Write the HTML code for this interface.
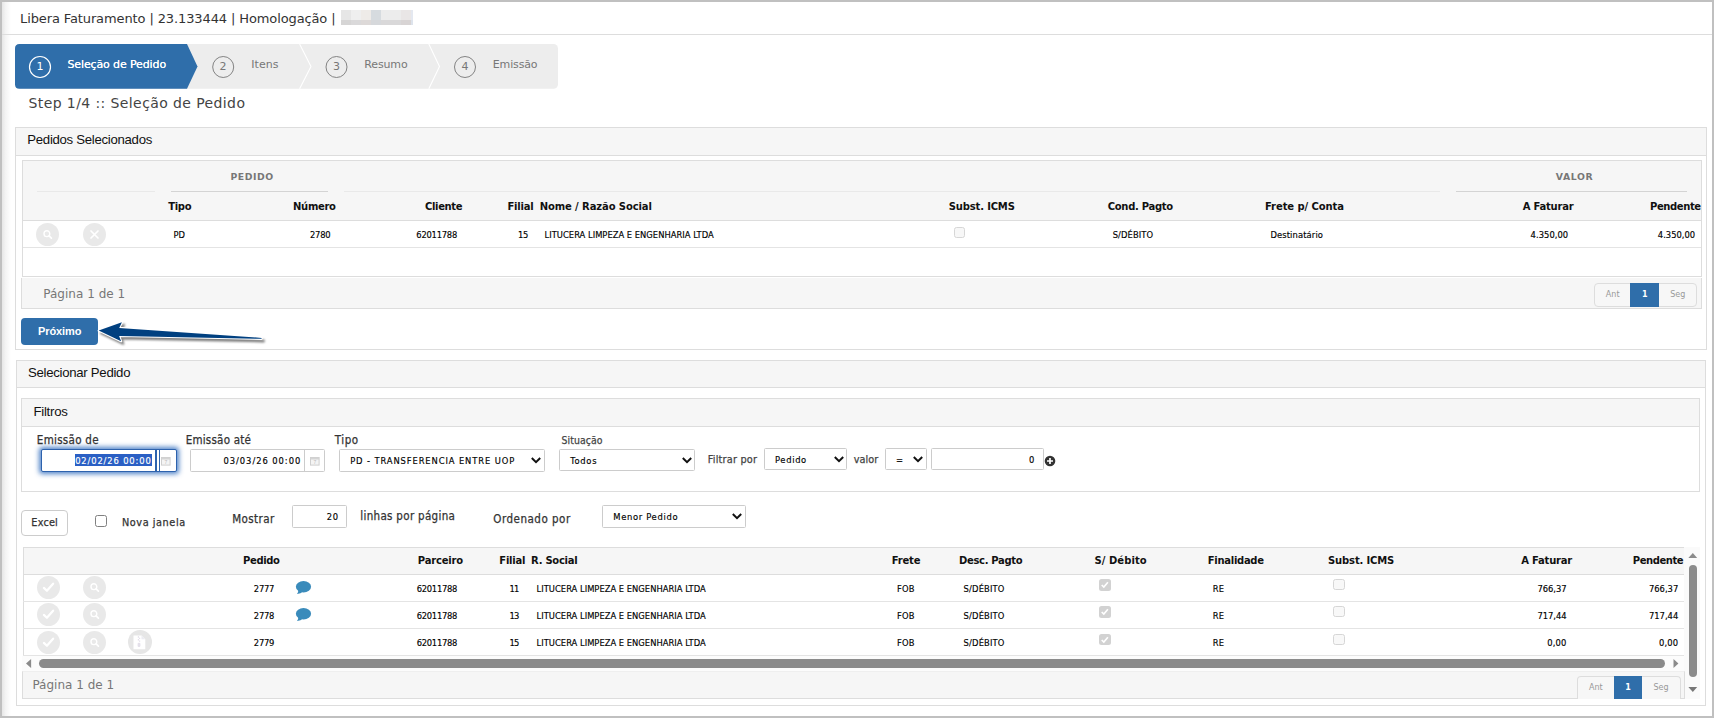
<!DOCTYPE html>
<html lang="pt-BR">
<head>
<meta charset="utf-8">
<title>Libera Faturamento</title>
<style>
*{box-sizing:border-box;margin:0;padding:0}
html,body{width:1714px;height:718px;overflow:hidden;background:#fff}
body{position:relative;font-family:"DejaVu Sans","Liberation Sans",sans-serif;color:#333}
.abs,.t{position:absolute}
.t{white-space:nowrap;line-height:1}
.frame{left:0;top:0;width:1714px;height:718px;border:2px solid #c0c0c0;pointer-events:none}
.bx{position:absolute;border:1px solid #ddd;background:#fff}
.g{background:#f6f6f6}
.hl{position:absolute;height:1px;background:#ddd}
.inp{position:absolute;border:1px solid #ccc;background:#fff;border-radius:1.5px}
.ic{position:absolute;width:23px;height:23px;border-radius:50%;background:#e9e9e9}
.cb{position:absolute;width:12px;height:12px;border:1px solid #c8c8c8;border-radius:2.5px;background:#fff}

</style>
</head>
<body>
<div class="abs" id="edgegrad" style="left:2px;top:2px;width:9px;height:714px;background:linear-gradient(90deg,#e6e6e6 0,#f4f4f4 40%,#fff 100%)"></div>
<!-- title bar -->
<div class="abs" style="left:341px;top:10px;width:72px;height:9.6px;background:linear-gradient(90deg,#e6e6e6 0 10px,#efefef 10px 20px,#eeebe8 20px 30px,#d6dbdf 30px 40px,#ececec 40px 60px,#e9e6e6 60px 70px,#e4e8f0 70px)"></div>
<div class="abs" style="left:341px;top:19.6px;width:72px;height:5.4px;background:linear-gradient(90deg,#d6d5d5 0 10px,#dad9da 10px 20px,#ddd9d8 20px 30px,#d6d8db 30px 40px,#d9d8d9 40px 60px,#d8d4d4 60px 70px,#dde3ec 70px)"></div>
<div class="hl" style="left:2px;top:34px;width:1710px"></div>

<!-- steps -->
<svg class="abs" style="left:15px;top:44px" width="544" height="45" viewBox="0 0 544 45">
  <rect x="0" y="0" width="543" height="44.8" rx="4.5" fill="#ededed"/>
  <path d="M4.5 0 H172 L182.5 22.4 L172 44.8 H4.5 Q0 44.8 0 40.3 V4.5 Q0 0 4.5 0Z" fill="#2f6eaa"/>
  <path d="M284.6 0 L296 22.4 L284.6 44.8" fill="none" stroke="#fff" stroke-width="1.1"/>
  <path d="M413.8 0 L424.5 22.4 L413.8 44.8" fill="none" stroke="#fff" stroke-width="1.1"/>
  <circle cx="25" cy="23" r="10.5" fill="none" stroke="#fff" stroke-width="1.2"/>
  <circle cx="208.2" cy="23" r="10.5" fill="none" stroke="#777" stroke-width="0.9"/>
  <circle cx="321.5" cy="23" r="10.5" fill="none" stroke="#777" stroke-width="0.9"/>
  <circle cx="450" cy="23" r="10.5" fill="none" stroke="#777" stroke-width="0.9"/>
</svg>

<!-- PANEL 1 -->
<div class="bx" style="left:15px;top:127px;width:1692px;height:223px;border-radius:0"></div>
<div class="abs g" style="left:16px;top:128px;width:1690px;height:27px"></div>
<div class="hl" style="left:16px;top:155px;width:1690px"></div>
<!-- inner table -->
<div class="bx" style="left:22px;top:160px;width:1680px;height:117px"></div>
<div class="abs g" style="left:23px;top:161px;width:1678px;height:59px"></div>
<div class="hl" style="left:37px;top:191px;width:118px;background:#e9e9e9"></div>
<div class="hl" style="left:171px;top:191px;width:157px;background:#d4d4d4"></div>
<div class="hl" style="left:344px;top:191px;width:1096px;background:#e9e9e9"></div>
<div class="hl" style="left:1456px;top:191px;width:231px;background:#d4d4d4"></div>
<div class="hl" style="left:23px;top:219.7px;width:1678px;height:1.4px"></div>
<div class="hl" style="left:23px;top:247px;width:1678px;background:#e4e4e4"></div>
<div class="ic" style="left:36px;top:222.5px"><svg width="23" height="23" viewBox="-11.5 -11.5 23 23"><circle cx="-0.6" cy="-0.8" r="2.9" fill="none" stroke="#fff" stroke-width="1.4"/><path d="M1.6 1.4 L3.9 3.7" stroke="#fff" stroke-width="1.7" stroke-linecap="round"/></svg></div>
<div class="ic" style="left:82.5px;top:222.5px"><svg width="23" height="23" viewBox="-11.5 -11.5 23 23"><path d="M-3.5 -3.5 L3.5 3.5 M3.5 -3.5 L-3.5 3.5" stroke="#fff" stroke-width="1.7" stroke-linecap="round"/></svg></div>
<div class="cb" style="left:953.5px;top:226.5px;width:11.5px;height:11px;border-color:#d6d6d6;background:#f7f7f7"></div>
<!-- footer 1 -->
<div class="abs g" style="left:21px;top:278px;width:1681px;height:31px;border:1px solid #ddd;border-top:none"></div>
<div class="abs" style="left:1594px;top:283px;width:103px;height:24px;border:1px solid #ddd;border-radius:4px;background:#f7f7f7"></div>
<div class="abs" style="left:1630px;top:283px;width:29px;height:24px;background:#2f6eaa"></div>
<!-- button -->
<div class="abs" style="left:21px;top:318px;width:77px;height:27px;border-radius:4px;background:#2f6eaa"></div>
<!-- arrow -->
<svg class="abs" style="left:90px;top:310px" width="190" height="46" viewBox="90 310 190 46">
  <defs>
    <filter id="sh" x="-10%" y="-40%" width="120%" height="200%"><feGaussianBlur stdDeviation="1.3"/></filter>
  </defs>
  <path d="M98.7 330.6 L121.9 322.2 L119.2 327.9 L261.6 337.9 L261.6 338.8 L119.1 335.9 L121.1 341.3 Z" transform="translate(2.2,2.6)" fill="#000" stroke="#000" stroke-width="2" stroke-linejoin="round" opacity="0.5" filter="url(#sh)"/>
  <path d="M98.7 330.6 L121.9 322.2 L119.2 327.9 L261.6 337.9 L261.6 338.8 L119.1 335.9 L121.1 341.3 Z" fill="#fff" stroke="#fff" stroke-width="2.2" stroke-linejoin="round"/>
  <path d="M98.7 330.6 L121.9 322.2 L119.2 327.9 L261.6 337.9 L261.6 338.8 L119.1 335.9 L121.1 341.3 Z" fill="#004080"/>
</svg>

<!-- PANEL 2 -->
<div class="bx" style="left:16px;top:360px;width:1690px;height:346px;border-radius:0"></div>
<div class="abs g" style="left:17px;top:361px;width:1688px;height:26px"></div>
<div class="hl" style="left:17px;top:387px;width:1688px"></div>
<!-- filtros -->
<div class="bx" style="left:21px;top:398px;width:1679px;height:94px"></div>
<div class="abs g" style="left:22px;top:399px;width:1677px;height:27px"></div>
<div class="hl" style="left:22px;top:426px;width:1677px"></div>
<!-- input 1 focused -->
<div class="abs" style="left:41px;top:449px;width:136px;height:23px;border:1.5px solid #2d62ad;border-radius:2px;background:#fff;box-shadow:0 0 5px 1.5px rgba(50,110,190,.85)"></div>
<div class="abs" style="left:155px;top:450px;width:1.5px;height:21px;background:#2d62ad"></div>
<div class="abs" style="left:158.5px;top:450px;width:1.5px;height:21px;background:#2d62ad"></div>
<div class="abs" style="left:75px;top:454.4px;width:77px;height:11.3px;background:#2a5fc4"></div>
<svg class="abs" style="left:161px;top:456px" width="10" height="10" viewBox="0 0 10 10"><rect x="0.5" y="1.5" width="8.6" height="7.6" fill="#f4f4f4" stroke="#cfcfcf"/><rect x="0.5" y="1.5" width="8.6" height="2" fill="#d4d4d4"/><text x="4.8" y="8.3" font-size="5" font-family="Liberation Sans,sans-serif" fill="#bbb" text-anchor="middle">7</text></svg>
<!-- input 2 -->
<div class="inp" style="left:190px;top:449px;width:135px;height:23px"></div>
<div class="abs" style="left:304px;top:450px;width:1px;height:21px;background:#ccc"></div>
<svg class="abs" style="left:310px;top:456px" width="10" height="10" viewBox="0 0 10 10"><rect x="0.5" y="1.5" width="8.6" height="7.6" fill="#f4f4f4" stroke="#cfcfcf"/><rect x="0.5" y="1.5" width="8.6" height="2" fill="#d4d4d4"/><text x="4.8" y="8.3" font-size="5" font-family="Liberation Sans,sans-serif" fill="#bbb" text-anchor="middle">7</text></svg>
<!-- selects -->
<div class="inp" style="left:339px;top:449px;width:206px;height:23px"></div>
<svg class="abs" style="left:530px;top:456px" width="12" height="9" viewBox="0 0 12 9"><path d="M1.8 2 L6 6.2 L10.2 2" fill="none" stroke="#111" stroke-width="2"/></svg>
<div class="inp" style="left:559px;top:449px;width:136px;height:22px"></div>
<svg class="abs" style="left:680.5px;top:456px" width="12" height="9" viewBox="0 0 12 9"><path d="M1.8 2 L6 6.2 L10.2 2" fill="none" stroke="#111" stroke-width="2"/></svg>
<div class="inp" style="left:764px;top:448px;width:83px;height:22px"></div>
<svg class="abs" style="left:832.5px;top:455px" width="12" height="9" viewBox="0 0 12 9"><path d="M1.8 2 L6 6.2 L10.2 2" fill="none" stroke="#111" stroke-width="2"/></svg>
<div class="inp" style="left:885px;top:448px;width:42px;height:22px"></div>
<svg class="abs" style="left:912px;top:455px" width="12" height="9" viewBox="0 0 12 9"><path d="M1.8 2 L6 6.2 L10.2 2" fill="none" stroke="#111" stroke-width="2"/></svg>
<div class="inp" style="left:931px;top:448px;width:113px;height:22px"></div>
<svg class="abs" style="left:1043.5px;top:454.5px" width="12" height="12" viewBox="-6 -6 12 12"><circle r="5.3" fill="#333"/><path d="M-3 0 H3 M0 -3 V3" stroke="#fff" stroke-width="1.7"/></svg>
<!-- toolbar -->
<div class="abs" style="left:21px;top:510px;width:47px;height:26px;border:1px solid #ccc;border-radius:4px;background:#fff"></div>
<div class="abs" style="left:95px;top:515px;width:12px;height:12px;border:1px solid #808080;border-radius:2.5px;background:#fff"></div>
<div class="inp" style="left:292px;top:505px;width:55px;height:23px"></div>
<div class="inp" style="left:602px;top:505px;width:144px;height:23px"></div>
<svg class="abs" style="left:731px;top:511.5px" width="12" height="9" viewBox="0 0 12 9"><path d="M1.8 2 L6 6.2 L10.2 2" fill="none" stroke="#111" stroke-width="2"/></svg>

<!-- bottom table -->
<div class="abs" style="left:1684px;top:547px;width:16px;height:152px;background:#fafafa"></div>
<div class="abs" style="left:22px;top:656px;width:1662px;height:15px;background:#fcfcfc"></div>
<div class="abs g" style="left:23px;top:547px;width:1661px;height:27px;border:1px solid #ddd;border-right:none;border-bottom:none"></div>
<div class="abs" style="left:23px;top:574px;width:1px;height:82px;background:#ddd"></div>
<div class="hl" style="left:23px;top:573.6px;width:1661px;height:1.5px"></div>
<div class="hl" style="left:23px;top:601px;width:1661px;background:#e4e4e4"></div>
<div class="hl" style="left:23px;top:628px;width:1661px;background:#e4e4e4"></div>
<div class="hl" style="left:23px;top:655px;width:1661px;background:#e4e4e4"></div>
<div class="ic" style="left:37px;top:576.0px"><svg width="23" height="23" viewBox="-11.5 -11.5 23 23"><path d="M-4.6 0.4 L-1.6 3.3 L4.6 -3.8" fill="none" stroke="#fff" stroke-width="2.2" stroke-linecap="round" stroke-linejoin="round"/></svg></div>
<div class="ic" style="left:83px;top:576.0px"><svg width="23" height="23" viewBox="-11.5 -11.5 23 23"><circle cx="-0.6" cy="-0.8" r="2.9" fill="none" stroke="#fff" stroke-width="1.4"/><path d="M1.6 1.4 L3.9 3.7" stroke="#fff" stroke-width="1.7" stroke-linecap="round"/></svg></div>
<div class="abs" style="left:1099px;top:579.2px;width:11.6px;height:11.6px;border-radius:2.5px;background:#d2d2d2"><svg width="11.6" height="11.6" viewBox="0 0 12 12" style="display:block"><path d="M2.8 6.2 L5 8.4 L9.2 3.4" fill="none" stroke="#fff" stroke-width="1.7"/></svg></div>
<div class="cb" style="left:1333px;top:579.4000000000001px;width:11.5px;height:11px;border-color:#d6d6d6;background:#f8f8f8"></div>
<svg class="abs" style="left:295px;top:579.9px" width="18" height="16" viewBox="0 0 18 16"><ellipse cx="8.5" cy="6.7" rx="7.6" ry="5.7" fill="#3a8bbb"/><path d="M3.2 9.5 Q3.6 12.5 2 14 Q6 13.6 8 11.5Z" fill="#3a8bbb"/></svg>
<div class="ic" style="left:37px;top:603.0px"><svg width="23" height="23" viewBox="-11.5 -11.5 23 23"><path d="M-4.6 0.4 L-1.6 3.3 L4.6 -3.8" fill="none" stroke="#fff" stroke-width="2.2" stroke-linecap="round" stroke-linejoin="round"/></svg></div>
<div class="ic" style="left:83px;top:603.0px"><svg width="23" height="23" viewBox="-11.5 -11.5 23 23"><circle cx="-0.6" cy="-0.8" r="2.9" fill="none" stroke="#fff" stroke-width="1.4"/><path d="M1.6 1.4 L3.9 3.7" stroke="#fff" stroke-width="1.7" stroke-linecap="round"/></svg></div>
<div class="abs" style="left:1099px;top:606.2px;width:11.6px;height:11.6px;border-radius:2.5px;background:#d2d2d2"><svg width="11.6" height="11.6" viewBox="0 0 12 12" style="display:block"><path d="M2.8 6.2 L5 8.4 L9.2 3.4" fill="none" stroke="#fff" stroke-width="1.7"/></svg></div>
<div class="cb" style="left:1333px;top:606.4000000000001px;width:11.5px;height:11px;border-color:#d6d6d6;background:#f8f8f8"></div>
<svg class="abs" style="left:295px;top:606.9px" width="18" height="16" viewBox="0 0 18 16"><ellipse cx="8.5" cy="6.7" rx="7.6" ry="5.7" fill="#3a8bbb"/><path d="M3.2 9.5 Q3.6 12.5 2 14 Q6 13.6 8 11.5Z" fill="#3a8bbb"/></svg>
<div class="ic" style="left:37px;top:630.5px"><svg width="23" height="23" viewBox="-11.5 -11.5 23 23"><path d="M-4.6 0.4 L-1.6 3.3 L4.6 -3.8" fill="none" stroke="#fff" stroke-width="2.2" stroke-linecap="round" stroke-linejoin="round"/></svg></div>
<div class="ic" style="left:83px;top:630.5px"><svg width="23" height="23" viewBox="-11.5 -11.5 23 23"><circle cx="-0.6" cy="-0.8" r="2.9" fill="none" stroke="#fff" stroke-width="1.4"/><path d="M1.6 1.4 L3.9 3.7" stroke="#fff" stroke-width="1.7" stroke-linecap="round"/></svg></div>
<div class="abs" style="left:1099px;top:633.6px;width:11.6px;height:11.6px;border-radius:2.5px;background:#d2d2d2"><svg width="11.6" height="11.6" viewBox="0 0 12 12" style="display:block"><path d="M2.8 6.2 L5 8.4 L9.2 3.4" fill="none" stroke="#fff" stroke-width="1.7"/></svg></div>
<div class="cb" style="left:1333px;top:633.8000000000001px;width:11.5px;height:11px;border-color:#d6d6d6;background:#f8f8f8"></div>
<div class="abs" style="left:128px;top:629.5px;width:24px;height:24.5px;border-radius:50%;background:#e6e6e6"><svg width="24" height="24.5" viewBox="-12 -12.25 24 24.5"><path d="M-6.5 -6.8 H1.5 L5.3 -3 V7 H-6.5Z" fill="#fff"/><path d="M1.5 -6.8 V-3 H5.3" fill="#ececf2"/><path d="M-1.6 -6 v1.4 m1.2 0 v1.4 m-1.2 0 v1.4 m1.2 0 v1.4" stroke="#e4e0ea" stroke-width="1.2"/><rect x="-2.4" y="0.6" width="2.8" height="4.2" rx="1.2" fill="#e4e0ea"/></svg></div>
<div class="abs" style="left:39px;top:659px;width:1626px;height:8.8px;border-radius:4.5px;background:#8b8b8b"></div>
<svg class="abs" style="left:25px;top:658px" width="8" height="11" viewBox="0 0 8 11"><path d="M6.1 0.9 V9.9 L1 5.4Z" fill="#8b8b8b"/></svg>
<svg class="abs" style="left:1672px;top:658px" width="8" height="11" viewBox="0 0 8 11"><path d="M1.5 1 V10 L6.4 5.5Z" fill="#8b8b8b"/></svg>
<div class="abs" style="left:1688.5px;top:565px;width:8.6px;height:112px;border-radius:4.3px;background:#8b8b8b"></div>
<svg class="abs" style="left:1687px;top:552px" width="12" height="7" viewBox="0 0 12 7"><path d="M1.4 6 H10.2 L5.8 1Z" fill="#8b8b8b"/></svg>
<svg class="abs" style="left:1687px;top:686px" width="12" height="7" viewBox="0 0 12 7"><path d="M1.4 1 H10.2 L5.8 6Z" fill="#777"/></svg>
<div class="abs g" style="left:22px;top:671px;width:1663px;height:28px;border:1px solid #ddd;border-top-color:#efefef"></div>
<div class="abs" style="left:1577px;top:676px;width:104px;height:23px;border:1px solid #ddd;border-bottom:none;border-radius:4px 4px 0 0;background:#f7f7f7"></div>
<div class="abs" style="left:1614px;top:676px;width:28px;height:23px;background:#2f6eaa"></div>

<!-- text layer -->
<div class="t" style='font-family:"DejaVu Sans","Liberation Sans",sans-serif;font-size:13px;color:#333;letter-spacing:-0.113px;left:20.00px;top:12.00px;'>Libera Faturamento | 23.133444 | Homologação |</div>
<div class="t" style='font-family:"DejaVu Sans","Liberation Sans",sans-serif;font-size:11px;color:#fff;left:36.50px;top:61.00px;'>1</div>
<div class="t" style='font-family:"DejaVu Sans","Liberation Sans",sans-serif;font-size:11px;color:#fff;letter-spacing:-0.124px;left:67.50px;top:59.00px;text-shadow:0 0 0.6px #fff;'>Seleção de Pedido</div>
<div class="t" style='font-family:"DejaVu Sans","Liberation Sans",sans-serif;font-size:11px;color:#777;left:219.50px;top:61.00px;'>2</div>
<div class="t" style='font-family:"DejaVu Sans","Liberation Sans",sans-serif;font-size:11px;color:#777;letter-spacing:0.074px;left:251.20px;top:59.00px;'>Itens</div>
<div class="t" style='font-family:"DejaVu Sans","Liberation Sans",sans-serif;font-size:11px;color:#777;left:333.00px;top:61.00px;'>3</div>
<div class="t" style='font-family:"DejaVu Sans","Liberation Sans",sans-serif;font-size:11px;color:#777;letter-spacing:-0.113px;left:364.20px;top:59.00px;'>Resumo</div>
<div class="t" style='font-family:"DejaVu Sans","Liberation Sans",sans-serif;font-size:11px;color:#777;left:461.50px;top:61.00px;'>4</div>
<div class="t" style='font-family:"DejaVu Sans","Liberation Sans",sans-serif;font-size:11px;color:#777;letter-spacing:-0.151px;left:492.80px;top:59.00px;'>Emissão</div>
<div class="t" style='font-family:"DejaVu Sans","Liberation Sans",sans-serif;font-size:14px;color:#444;letter-spacing:0.402px;left:28.50px;top:96.00px;'>Step 1/4 :: Seleção de Pedido</div>
<div class="t" style='font-family:"Liberation Sans",sans-serif;font-size:13.2px;color:#111;letter-spacing:-0.291px;left:27.30px;top:133.00px;'>Pedidos Selecionados</div>
<div class="t" style='font-family:"DejaVu Sans","Liberation Sans",sans-serif;font-size:9.3px;color:#777;font-weight:bold;letter-spacing:0.522px;left:230.50px;top:172.00px;'>PEDIDO</div>
<div class="t" style='font-family:"DejaVu Sans","Liberation Sans",sans-serif;font-size:9.3px;color:#777;font-weight:bold;letter-spacing:0.656px;left:1555.70px;top:172.00px;'>VALOR</div>
<div class="t" style='font-family:"DejaVu Sans","Liberation Sans",sans-serif;font-size:10px;color:#111;font-weight:bold;letter-spacing:-0.320px;left:168.20px;top:202.20px;'>Tipo</div>
<div class="t" style='font-family:"DejaVu Sans","Liberation Sans",sans-serif;font-size:10px;color:#111;font-weight:bold;letter-spacing:-0.300px;left:293.00px;top:202.20px;'>Número</div>
<div class="t" style='font-family:"DejaVu Sans","Liberation Sans",sans-serif;font-size:10px;color:#111;font-weight:bold;letter-spacing:-0.353px;left:425.00px;top:202.20px;'>Cliente</div>
<div class="t" style='font-family:"DejaVu Sans","Liberation Sans",sans-serif;font-size:10px;color:#111;font-weight:bold;letter-spacing:-0.216px;left:507.50px;top:202.20px;'>Filial</div>
<div class="t" style='font-family:"DejaVu Sans","Liberation Sans",sans-serif;font-size:10px;color:#111;font-weight:bold;letter-spacing:-0.102px;left:539.70px;top:202.20px;'>Nome / Razão Social</div>
<div class="t" style='font-family:"DejaVu Sans","Liberation Sans",sans-serif;font-size:10px;color:#111;font-weight:bold;letter-spacing:-0.165px;left:948.80px;top:202.20px;'>Subst. ICMS</div>
<div class="t" style='font-family:"DejaVu Sans","Liberation Sans",sans-serif;font-size:10px;color:#111;font-weight:bold;letter-spacing:-0.290px;left:1107.70px;top:202.20px;'>Cond. Pagto</div>
<div class="t" style='font-family:"DejaVu Sans","Liberation Sans",sans-serif;font-size:10px;color:#111;font-weight:bold;letter-spacing:-0.086px;left:1265.00px;top:202.20px;'>Frete p/ Conta</div>
<div class="t" style='font-family:"DejaVu Sans","Liberation Sans",sans-serif;font-size:10px;color:#111;font-weight:bold;letter-spacing:-0.215px;left:1522.70px;top:202.20px;'>A Faturar</div>
<div class="t" style='font-family:"DejaVu Sans","Liberation Sans",sans-serif;font-size:10px;color:#111;font-weight:bold;letter-spacing:-0.395px;left:1650.00px;top:202.20px;'>Pendente</div>
<div class="t" style='font-family:"DejaVu Sans Condensed","DejaVu Sans","Liberation Sans",sans-serif;font-size:9.3px;color:#000;-webkit-text-stroke:0.15px;letter-spacing:-0.100px;left:173.60px;top:230.00px;'>PD</div>
<div class="t" style='font-family:"DejaVu Sans Condensed","DejaVu Sans","Liberation Sans",sans-serif;font-size:9.3px;color:#000;-webkit-text-stroke:0.15px;letter-spacing:-0.295px;left:310.10px;top:230.00px;'>2780</div>
<div class="t" style='font-family:"DejaVu Sans Condensed","DejaVu Sans","Liberation Sans",sans-serif;font-size:9.3px;color:#000;-webkit-text-stroke:0.15px;letter-spacing:-0.233px;left:416.30px;top:230.00px;'>62011788</div>
<div class="t" style='font-family:"DejaVu Sans Condensed","DejaVu Sans","Liberation Sans",sans-serif;font-size:9.3px;color:#000;-webkit-text-stroke:0.15px;letter-spacing:-0.220px;left:518.00px;top:230.00px;'>15</div>
<div class="t" style='font-family:"DejaVu Sans Condensed","DejaVu Sans","Liberation Sans",sans-serif;font-size:9.3px;color:#000;-webkit-text-stroke:0.15px;letter-spacing:0.011px;left:544.60px;top:230.00px;'>LITUCERA LIMPEZA E ENGENHARIA LTDA</div>
<div class="t" style='font-family:"DejaVu Sans Condensed","DejaVu Sans","Liberation Sans",sans-serif;font-size:9.3px;color:#000;-webkit-text-stroke:0.15px;letter-spacing:0.094px;left:1112.70px;top:230.00px;'>S/DÉBITO</div>
<div class="t" style='font-family:"DejaVu Sans Condensed","DejaVu Sans","Liberation Sans",sans-serif;font-size:9.3px;color:#000;-webkit-text-stroke:0.15px;letter-spacing:0.120px;left:1270.40px;top:230.00px;'>Destinatário</div>
<div class="t" style='font-family:"DejaVu Sans Condensed","DejaVu Sans","Liberation Sans",sans-serif;font-size:9.3px;color:#000;-webkit-text-stroke:0.15px;letter-spacing:0.046px;left:1530.60px;top:230.00px;'>4.350,00</div>
<div class="t" style='font-family:"DejaVu Sans Condensed","DejaVu Sans","Liberation Sans",sans-serif;font-size:9.3px;color:#000;-webkit-text-stroke:0.15px;letter-spacing:0.021px;left:1657.80px;top:230.00px;'>4.350,00</div>
<div class="t" style='font-family:"DejaVu Sans","Liberation Sans",sans-serif;font-size:12px;color:#777;letter-spacing:0.024px;left:43.20px;top:288.00px;'>Página 1 de 1</div>
<div class="t" style='font-family:"DejaVu Sans","Liberation Sans",sans-serif;font-size:8px;color:#999;left:1605.86px;top:291.00px;'>Ant</div>
<div class="t" style='font-family:"DejaVu Sans","Liberation Sans",sans-serif;font-size:8px;color:#fff;font-weight:bold;left:1642.01px;top:291.00px;'>1</div>
<div class="t" style='font-family:"DejaVu Sans","Liberation Sans",sans-serif;font-size:8px;color:#999;left:1670.26px;top:291.00px;'>Seg</div>
<div class="t" style='font-family:"Liberation Sans",sans-serif;font-size:11px;color:#fff;font-weight:bold;letter-spacing:-0.088px;left:38.00px;top:325.90px;'>Próximo</div>
<div class="t" style='font-family:"Liberation Sans",sans-serif;font-size:13.2px;color:#111;letter-spacing:-0.285px;left:28.00px;top:366.00px;'>Selecionar Pedido</div>
<div class="t" style='font-family:"Liberation Sans",sans-serif;font-size:13.2px;color:#111;letter-spacing:-0.244px;left:33.40px;top:404.80px;'>Filtros</div>
<div class="t" style='font-family:"DejaVu Sans Condensed","DejaVu Sans","Liberation Sans",sans-serif;font-size:11.5px;color:#333;-webkit-text-stroke:0.25px;letter-spacing:0.293px;left:36.80px;top:435.00px;'>Emissão de</div>
<div class="t" style='font-family:"DejaVu Sans Condensed","DejaVu Sans","Liberation Sans",sans-serif;font-size:11.5px;color:#333;-webkit-text-stroke:0.25px;letter-spacing:0.227px;left:185.70px;top:435.00px;'>Emissão até</div>
<div class="t" style='font-family:"DejaVu Sans Condensed","DejaVu Sans","Liberation Sans",sans-serif;font-size:11.5px;color:#333;-webkit-text-stroke:0.25px;letter-spacing:0.513px;left:334.80px;top:435.00px;'>Tipo</div>
<div class="t" style='font-family:"DejaVu Sans Condensed","DejaVu Sans","Liberation Sans",sans-serif;font-size:10.4px;color:#444;-webkit-text-stroke:0.25px;letter-spacing:0.070px;left:561.50px;top:435.00px;'>Situação</div>
<div class="t" style='font-family:"DejaVu Sans Condensed","DejaVu Sans","Liberation Sans",sans-serif;font-size:9.3px;color:#fff;-webkit-text-stroke:0.15px;letter-spacing:0.862px;left:75.20px;top:456.00px;'>02/02/26 00:00</div>
<div class="t" style='font-family:"DejaVu Sans Condensed","DejaVu Sans","Liberation Sans",sans-serif;font-size:9.3px;color:#000;-webkit-text-stroke:0.15px;letter-spacing:0.955px;left:223.50px;top:456.00px;'>03/03/26 00:00</div>
<div class="t" style='font-family:"DejaVu Sans Condensed","DejaVu Sans","Liberation Sans",sans-serif;font-size:9.3px;color:#000;-webkit-text-stroke:0.15px;letter-spacing:0.892px;left:350.20px;top:456.00px;'>PD - TRANSFERENCIA ENTRE UOP</div>
<div class="t" style='font-family:"DejaVu Sans Condensed","DejaVu Sans","Liberation Sans",sans-serif;font-size:9.3px;color:#000;-webkit-text-stroke:0.15px;letter-spacing:0.693px;left:570.30px;top:456.00px;'>Todos</div>
<div class="t" style='font-family:"DejaVu Sans Condensed","DejaVu Sans","Liberation Sans",sans-serif;font-size:10.8px;color:#444;-webkit-text-stroke:0.25px;letter-spacing:0.205px;left:707.80px;top:455.00px;'>Filtrar por</div>
<div class="t" style='font-family:"DejaVu Sans Condensed","DejaVu Sans","Liberation Sans",sans-serif;font-size:9.3px;color:#000;-webkit-text-stroke:0.15px;letter-spacing:0.660px;left:775.00px;top:455.00px;'>Pedido</div>
<div class="t" style='font-family:"DejaVu Sans Condensed","DejaVu Sans","Liberation Sans",sans-serif;font-size:10.8px;color:#444;-webkit-text-stroke:0.25px;letter-spacing:0.011px;left:853.80px;top:455.00px;'>valor</div>
<div class="t" style='font-family:"DejaVu Sans Condensed","DejaVu Sans","Liberation Sans",sans-serif;font-size:9.3px;color:#000;-webkit-text-stroke:0.15px;letter-spacing:0.084px;left:896.10px;top:455.00px;'>=</div>
<div class="t" style='font-family:"DejaVu Sans Condensed","DejaVu Sans","Liberation Sans",sans-serif;font-size:9.3px;color:#000;-webkit-text-stroke:0.15px;letter-spacing:1.072px;left:1029.10px;top:455.00px;'>0</div>
<div class="t" style='font-family:"DejaVu Sans Condensed","DejaVu Sans","Liberation Sans",sans-serif;font-size:10.8px;color:#333;-webkit-text-stroke:0.25px;letter-spacing:0.196px;left:31.30px;top:517.70px;'>Excel</div>
<div class="t" style='font-family:"DejaVu Sans Condensed","DejaVu Sans","Liberation Sans",sans-serif;font-size:10.8px;color:#333;-webkit-text-stroke:0.25px;letter-spacing:0.569px;left:122.00px;top:517.50px;'>Nova janela</div>
<div class="t" style='font-family:"DejaVu Sans Condensed","DejaVu Sans","Liberation Sans",sans-serif;font-size:11.5px;color:#333;-webkit-text-stroke:0.25px;letter-spacing:0.408px;left:232.20px;top:514.00px;'>Mostrar</div>
<div class="t" style='font-family:"DejaVu Sans Condensed","DejaVu Sans","Liberation Sans",sans-serif;font-size:9.3px;color:#000;-webkit-text-stroke:0.15px;letter-spacing:0.630px;left:326.80px;top:511.80px;'>20</div>
<div class="t" style='font-family:"DejaVu Sans Condensed","DejaVu Sans","Liberation Sans",sans-serif;font-size:11.5px;color:#333;-webkit-text-stroke:0.25px;letter-spacing:0.313px;left:360.30px;top:511.00px;'>linhas por página</div>
<div class="t" style='font-family:"DejaVu Sans Condensed","DejaVu Sans","Liberation Sans",sans-serif;font-size:11.5px;color:#333;-webkit-text-stroke:0.25px;letter-spacing:0.503px;left:493.30px;top:514.00px;'>Ordenado por</div>
<div class="t" style='font-family:"DejaVu Sans Condensed","DejaVu Sans","Liberation Sans",sans-serif;font-size:9.3px;color:#000;-webkit-text-stroke:0.15px;letter-spacing:0.674px;left:613.30px;top:511.70px;'>Menor Pedido</div>
<div class="t" style='font-family:"DejaVu Sans","Liberation Sans",sans-serif;font-size:10px;color:#111;font-weight:bold;letter-spacing:-0.389px;left:243.10px;top:556.00px;'>Pedido</div>
<div class="t" style='font-family:"DejaVu Sans","Liberation Sans",sans-serif;font-size:10px;color:#111;font-weight:bold;letter-spacing:-0.198px;left:417.80px;top:556.00px;'>Parceiro</div>
<div class="t" style='font-family:"DejaVu Sans","Liberation Sans",sans-serif;font-size:10px;color:#111;font-weight:bold;letter-spacing:-0.233px;left:499.30px;top:556.00px;'>Filial</div>
<div class="t" style='font-family:"DejaVu Sans","Liberation Sans",sans-serif;font-size:10px;color:#111;font-weight:bold;letter-spacing:-0.276px;left:531.10px;top:556.00px;'>R. Social</div>
<div class="t" style='font-family:"DejaVu Sans","Liberation Sans",sans-serif;font-size:10px;color:#111;font-weight:bold;letter-spacing:-0.214px;left:891.80px;top:556.00px;'>Frete</div>
<div class="t" style='font-family:"DejaVu Sans","Liberation Sans",sans-serif;font-size:10px;color:#111;font-weight:bold;letter-spacing:-0.316px;left:959.00px;top:556.00px;'>Desc. Pagto</div>
<div class="t" style='font-family:"DejaVu Sans","Liberation Sans",sans-serif;font-size:10px;color:#111;font-weight:bold;letter-spacing:0.072px;left:1094.40px;top:556.00px;'>S/ Débito</div>
<div class="t" style='font-family:"DejaVu Sans","Liberation Sans",sans-serif;font-size:10px;color:#111;font-weight:bold;letter-spacing:-0.293px;left:1207.80px;top:556.00px;'>Finalidade</div>
<div class="t" style='font-family:"DejaVu Sans","Liberation Sans",sans-serif;font-size:10px;color:#111;font-weight:bold;letter-spacing:-0.138px;left:1328.00px;top:556.00px;'>Subst. ICMS</div>
<div class="t" style='font-family:"DejaVu Sans","Liberation Sans",sans-serif;font-size:10px;color:#111;font-weight:bold;letter-spacing:-0.226px;left:1521.30px;top:556.00px;'>A Faturar</div>
<div class="t" style='font-family:"DejaVu Sans","Liberation Sans",sans-serif;font-size:10px;color:#111;font-weight:bold;letter-spacing:-0.432px;left:1632.80px;top:556.00px;'>Pendente</div>
<div class="t" style='font-family:"DejaVu Sans Condensed","DejaVu Sans","Liberation Sans",sans-serif;font-size:9.3px;color:#000;-webkit-text-stroke:0.15px;letter-spacing:-0.220px;left:253.80px;top:584.00px;'>2777</div>
<div class="t" style='font-family:"DejaVu Sans Condensed","DejaVu Sans","Liberation Sans",sans-serif;font-size:9.3px;color:#000;-webkit-text-stroke:0.15px;letter-spacing:-0.258px;left:416.70px;top:584.00px;'>62011788</div>
<div class="t" style='font-family:"DejaVu Sans Condensed","DejaVu Sans","Liberation Sans",sans-serif;font-size:9.3px;color:#000;-webkit-text-stroke:0.15px;letter-spacing:-0.820px;left:509.60px;top:584.00px;'>11</div>
<div class="t" style='font-family:"DejaVu Sans Condensed","DejaVu Sans","Liberation Sans",sans-serif;font-size:9.3px;color:#000;-webkit-text-stroke:0.15px;letter-spacing:0.011px;left:536.60px;top:584.00px;'>LITUCERA LIMPEZA E ENGENHARIA LTDA</div>
<div class="t" style='font-family:"DejaVu Sans Condensed","DejaVu Sans","Liberation Sans",sans-serif;font-size:9.3px;color:#000;-webkit-text-stroke:0.15px;letter-spacing:0.120px;left:897.10px;top:584.00px;'>FOB</div>
<div class="t" style='font-family:"DejaVu Sans Condensed","DejaVu Sans","Liberation Sans",sans-serif;font-size:9.3px;color:#000;-webkit-text-stroke:0.15px;letter-spacing:0.156px;left:963.60px;top:584.00px;'>S/DÉBITO</div>
<div class="t" style='font-family:"DejaVu Sans Condensed","DejaVu Sans","Liberation Sans",sans-serif;font-size:9.3px;color:#000;-webkit-text-stroke:0.15px;letter-spacing:0.145px;left:1212.80px;top:584.00px;'>RE</div>
<div class="t" style='font-family:"DejaVu Sans Condensed","DejaVu Sans","Liberation Sans",sans-serif;font-size:9.3px;color:#000;-webkit-text-stroke:0.15px;letter-spacing:-0.011px;left:1537.40px;top:584.00px;'>766,37</div>
<div class="t" style='font-family:"DejaVu Sans Condensed","DejaVu Sans","Liberation Sans",sans-serif;font-size:9.3px;color:#000;-webkit-text-stroke:0.15px;letter-spacing:-0.011px;left:1649.00px;top:584.00px;'>766,37</div>
<div class="t" style='font-family:"DejaVu Sans Condensed","DejaVu Sans","Liberation Sans",sans-serif;font-size:9.3px;color:#000;-webkit-text-stroke:0.15px;letter-spacing:-0.220px;left:253.80px;top:611.00px;'>2778</div>
<div class="t" style='font-family:"DejaVu Sans Condensed","DejaVu Sans","Liberation Sans",sans-serif;font-size:9.3px;color:#000;-webkit-text-stroke:0.15px;letter-spacing:-0.258px;left:416.70px;top:611.00px;'>62011788</div>
<div class="t" style='font-family:"DejaVu Sans Condensed","DejaVu Sans","Liberation Sans",sans-serif;font-size:9.3px;color:#000;-webkit-text-stroke:0.15px;letter-spacing:-0.820px;left:509.60px;top:611.00px;'>13</div>
<div class="t" style='font-family:"DejaVu Sans Condensed","DejaVu Sans","Liberation Sans",sans-serif;font-size:9.3px;color:#000;-webkit-text-stroke:0.15px;letter-spacing:0.011px;left:536.60px;top:611.00px;'>LITUCERA LIMPEZA E ENGENHARIA LTDA</div>
<div class="t" style='font-family:"DejaVu Sans Condensed","DejaVu Sans","Liberation Sans",sans-serif;font-size:9.3px;color:#000;-webkit-text-stroke:0.15px;letter-spacing:0.120px;left:897.10px;top:611.00px;'>FOB</div>
<div class="t" style='font-family:"DejaVu Sans Condensed","DejaVu Sans","Liberation Sans",sans-serif;font-size:9.3px;color:#000;-webkit-text-stroke:0.15px;letter-spacing:0.156px;left:963.60px;top:611.00px;'>S/DÉBITO</div>
<div class="t" style='font-family:"DejaVu Sans Condensed","DejaVu Sans","Liberation Sans",sans-serif;font-size:9.3px;color:#000;-webkit-text-stroke:0.15px;letter-spacing:0.145px;left:1212.80px;top:611.00px;'>RE</div>
<div class="t" style='font-family:"DejaVu Sans Condensed","DejaVu Sans","Liberation Sans",sans-serif;font-size:9.3px;color:#000;-webkit-text-stroke:0.15px;letter-spacing:-0.011px;left:1537.40px;top:611.00px;'>717,44</div>
<div class="t" style='font-family:"DejaVu Sans Condensed","DejaVu Sans","Liberation Sans",sans-serif;font-size:9.3px;color:#000;-webkit-text-stroke:0.15px;letter-spacing:-0.011px;left:1649.00px;top:611.00px;'>717,44</div>
<div class="t" style='font-family:"DejaVu Sans Condensed","DejaVu Sans","Liberation Sans",sans-serif;font-size:9.3px;color:#000;-webkit-text-stroke:0.15px;letter-spacing:-0.220px;left:253.80px;top:638.00px;'>2779</div>
<div class="t" style='font-family:"DejaVu Sans Condensed","DejaVu Sans","Liberation Sans",sans-serif;font-size:9.3px;color:#000;-webkit-text-stroke:0.15px;letter-spacing:-0.258px;left:416.70px;top:638.00px;'>62011788</div>
<div class="t" style='font-family:"DejaVu Sans Condensed","DejaVu Sans","Liberation Sans",sans-serif;font-size:9.3px;color:#000;-webkit-text-stroke:0.15px;letter-spacing:-0.820px;left:509.60px;top:638.00px;'>15</div>
<div class="t" style='font-family:"DejaVu Sans Condensed","DejaVu Sans","Liberation Sans",sans-serif;font-size:9.3px;color:#000;-webkit-text-stroke:0.15px;letter-spacing:0.011px;left:536.60px;top:638.00px;'>LITUCERA LIMPEZA E ENGENHARIA LTDA</div>
<div class="t" style='font-family:"DejaVu Sans Condensed","DejaVu Sans","Liberation Sans",sans-serif;font-size:9.3px;color:#000;-webkit-text-stroke:0.15px;letter-spacing:0.120px;left:897.10px;top:638.00px;'>FOB</div>
<div class="t" style='font-family:"DejaVu Sans Condensed","DejaVu Sans","Liberation Sans",sans-serif;font-size:9.3px;color:#000;-webkit-text-stroke:0.15px;letter-spacing:0.156px;left:963.60px;top:638.00px;'>S/DÉBITO</div>
<div class="t" style='font-family:"DejaVu Sans Condensed","DejaVu Sans","Liberation Sans",sans-serif;font-size:9.3px;color:#000;-webkit-text-stroke:0.15px;letter-spacing:0.145px;left:1212.80px;top:638.00px;'>RE</div>
<div class="t" style='font-family:"DejaVu Sans Condensed","DejaVu Sans","Liberation Sans",sans-serif;font-size:9.3px;color:#000;-webkit-text-stroke:0.15px;letter-spacing:0.169px;left:1547.30px;top:638.00px;'>0,00</div>
<div class="t" style='font-family:"DejaVu Sans Condensed","DejaVu Sans","Liberation Sans",sans-serif;font-size:9.3px;color:#000;-webkit-text-stroke:0.15px;letter-spacing:0.169px;left:1658.90px;top:638.00px;'>0,00</div>
<div class="t" style='font-family:"DejaVu Sans","Liberation Sans",sans-serif;font-size:12px;color:#777;letter-spacing:0.009px;left:32.40px;top:678.80px;'>Página 1 de 1</div>
<div class="t" style='font-family:"DejaVu Sans","Liberation Sans",sans-serif;font-size:8px;color:#999;left:1588.96px;top:684.00px;'>Ant</div>
<div class="t" style='font-family:"DejaVu Sans","Liberation Sans",sans-serif;font-size:8px;color:#fff;font-weight:bold;left:1625.21px;top:684.00px;'>1</div>
<div class="t" style='font-family:"DejaVu Sans","Liberation Sans",sans-serif;font-size:8px;color:#999;left:1653.46px;top:684.00px;'>Seg</div>
<div class="abs frame"></div>
</body>
</html>
